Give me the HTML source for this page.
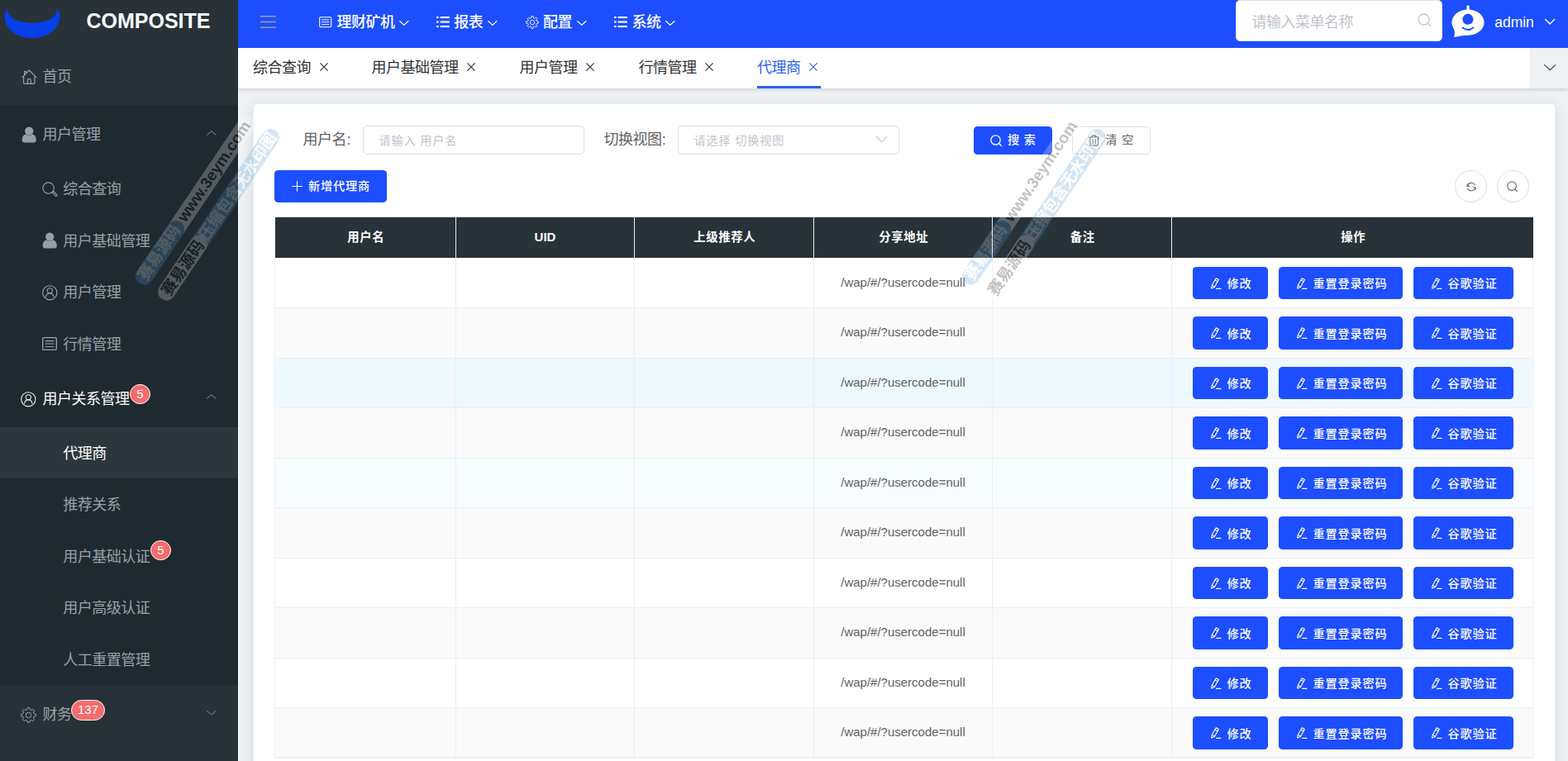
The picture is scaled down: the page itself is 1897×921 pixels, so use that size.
<!DOCTYPE html>
<html lang="zh-CN">
<head>
<meta charset="utf-8">
<title>COMPOSITE - 代理商</title>
<style>
*{box-sizing:border-box;margin:0;padding:0}
html,body{width:1897px;height:921px;overflow:hidden;background:#eff2f4}
body{font-family:"Liberation Sans","Noto Sans CJK SC",sans-serif;font-size:17.5px;color:#606266;position:relative}
ul{list-style:none}
svg.ic{position:absolute;display:block;overflow:visible}
.t{position:absolute;white-space:nowrap;line-height:1;font-size:18px;letter-spacing:-.5px}
.t.s{font-size:14.2px;letter-spacing:.8px}
.t.l{font-size:17.5px;letter-spacing:0}

/* sidebar */
.side{position:absolute;left:0;top:0;width:288px;height:921px;background:#273238;color:#98a1aa;overflow:hidden;z-index:6}
.logo{position:relative;height:57px;background:#293238}
.logo h1{position:absolute;left:104.5px;top:12.5px;line-height:25px;font-size:25px;font-weight:700;color:#fff}
.menu .top{height:70px;position:relative;font-size:17.5px}
.menu .grp{background:#1f2a30}
.menu .top .t{left:51.5px;top:26.9px}
.menu .top.cur{color:#fff}
.menu .sub li{height:62.4px;position:relative;font-size:17.5px}
.menu .sub li .t{left:76.3px;top:23.4px}
.menu .sub li.act{background:#2c363d;color:#fff}
.badge{position:absolute;background:#f56c6c;color:#fff;border:1.25px solid #fff;border-radius:13px;height:24.4px;line-height:21.6px;font-size:15px;text-align:center;padding:0 7px;min-width:25px;white-space:nowrap}

/* header */
.head{position:absolute;left:288px;top:0;width:1609px;height:58px;background:#1d4eff;color:#fff;z-index:4}
.nav li{position:absolute;top:0;height:58px;font-size:17.5px;font-weight:500}
.nav li .t{top:17.9px}
.search{position:absolute;left:1207px;top:-0.5px;width:250px;height:50.5px;background:#fff;border-radius:5px;border:1.25px solid #dcdfe6;color:#c0c4cc;font-size:17.5px}
.search .t{left:18.6px;top:17.2px}
.uname{left:1520.2px;top:18.6px}

/* tabs */
.tabs{position:absolute;left:288px;top:58px;width:1609px;height:49px;background:#fff;box-shadow:0 1.5px 5px rgba(0,21,41,.16);z-index:3}
.tabs li{position:absolute;top:0;height:49px;font-size:17.5px;color:#303133}
.tabs li .t{top:15px;left:0}
.tabs li.on{color:#2b62ec}
.tabs li.on:after{content:"";position:absolute;left:0;right:0;bottom:0;height:3px;background:#2b62ec}
.tabs .more{position:absolute;right:0;top:0;width:46px;height:49px;background:#eff2f4}

/* card */
.card{position:absolute;left:306px;top:125px;width:1576px;height:840px;background:#fff;border:1px solid #ebeef5;border-radius:5px;box-shadow:0 2.5px 15px rgba(0,0,0,.1);z-index:1}
.edge{position:absolute;left:288px;top:107px;width:1px;height:814px;background:#fff;z-index:2}
.lab{color:#606266}
.lab i{font-style:normal;margin-left:.4px}
.inp{position:absolute;height:35px;border:1px solid #dcdfe6;border-radius:5px;background:#fff;color:#c0c4cc;font-size:15px}
.inp .t{left:18.6px;top:10.4px}
.btn{position:absolute;border-radius:4.5px;background:#1d4eff;color:#fff;font-size:15px;white-space:nowrap;font-weight:500}
.btn.plain{background:#fff;border:1px solid #dcdfe6;color:#606266;font-weight:400}
.circ{position:absolute;width:39px;height:39px;border:1px solid #dcdfe6;border-radius:50%;background:#fff}

/* table */
table{position:absolute;left:25px;top:135.6px;border-left:1px solid #ebeef5;border-top:1px solid #ebeef5;border-bottom:1px solid #ebeef5;border-collapse:separate;border-spacing:0;table-layout:fixed;width:1523px;font-size:15px}
th{height:49px;background:#283239;color:#fff;font-weight:700;text-align:center;border-right:1px solid #ebeef5;padding:1px 0 0;line-height:1;font-size:14.4px;letter-spacing:.6px}
th{padding-left:1.6px}
th.l{font-size:15px;letter-spacing:0;padding:0 0 1px}
th:last-child{border-right:0}
td{border-right:1px solid #ebeef5;border-bottom:1px solid #ebeef5;text-align:center;padding:0;color:#606266;line-height:1;white-space:nowrap}
tr.s td{background:#fafafa}
tr.h td{background:#eef8ff}
tr.c td{background:#f7fcff}
td.u{padding-bottom:2px}
td.op{text-align:left;vertical-align:top;padding-left:25px;font-size:0}
td .ob{display:inline-block;position:relative;font-weight:500;height:39px;border-radius:4.5px;background:#1d4eff;color:#fff;margin-right:13px;vertical-align:top}
td .ob.w2{width:91px}
td .ob.w6{width:150px}
td .ob.w4{width:121px;margin-right:0}
tr.e .ob{height:40px}
td .ob .pen{position:absolute;left:21px;top:13px}
td .ob .t{left:41.6px;top:13.4px}
tr.e .ob .t{top:14px}
tr.e .ob .pen{top:13.7px}

/* watermark */
.wm{position:absolute;z-index:9;width:0;height:0;transform-origin:0 0;transform:rotate(-56deg);opacity:.235;pointer-events:none;font-weight:700;white-space:nowrap}
.wm div{position:absolute;height:21px;border-radius:10.5px;font-size:19px;line-height:21px}
.wm span{position:absolute;top:-.5px}
.wm .g{background:#fff;color:#000}
.wm .b{background:#4a98d8;color:#fff}
</style>
</head>
<body>
<aside class="side">
<div class="logo"><svg class="ic" style="left:0;top:0" width="80" height="57" viewBox="0 0 80 57"><path d="M9.8 9.6 C6.6 13.6 5.2 18.4 5.7 22.6 C7.2 36.4 22 46.2 39 46.2 C56 46.2 70.8 36.4 72.3 22.6 C72.8 18.4 71.4 13.6 68.2 9.6 C69.6 15 67.6 19.4 61.4 22.8 C55 26.2 47.2 28 39 28 C30.8 28 23 26.2 16.6 22.8 C10.4 19.4 8.4 15 9.8 9.6Z" fill="#0540e9"/></svg><h1>COMPOSITE</h1></div>
<nav class="menu">
<div class="top "><svg class="ic" style="left:25.6px;top:27px" width="19" height="19" viewBox="0 0 19 19" fill="none" ><g stroke="#98a1aa" stroke-width="1.15" stroke-linejoin="round" stroke-linecap="round"><path d="M0.8 9.6 L9.3 1 L17.8 9.6"/><path d="M2.6 8.6 V16.2 Q2.6 17.4 3.8 17.4 H14.8 Q16 17.4 16 16.2 V8.6"/><path d="M3.6 6.4 V2.4 H5.4 V4.6"/><path d="M7.4 17.2 V13 Q7.4 11.4 9.3 11.4 Q11.2 11.4 11.2 13 V17.2"/></g></svg><span class="t">首页</span></div>
<div class="grp">
<div class="top "><svg class="ic" style="left:25.6px;top:25.8px" width="19" height="21" viewBox="0 0 19 21" fill="none" ><g fill="#969fa8"><circle cx="9.2" cy="5.6" r="5.2"/><path d="M0.6 16.6 Q0.6 10.2 5.2 9.4 Q9.2 12.4 13.2 9.4 Q17.8 10.2 17.8 16.6 Q17.8 19.6 14.8 19.6 H3.6 Q0.6 19.6 0.6 16.6Z"/></g></svg><span class="t">用户管理</span><svg class="ic" style="left:249.8px;top:30.6px" width="11.6" height="5.8" viewBox="0 0 11.6 5.8" fill="none" ><path d="M0.6 5.2 L5.8 0.8 L11.0 5.2" stroke="#8b949c" stroke-width="1.0" stroke-linecap="round" stroke-linejoin="round"/></svg></div>
<ul class="sub">
<li><svg class="ic" style="left:50.6px;top:22.8px" width="19" height="19" viewBox="0 0 19 19" fill="none" ><g stroke="#98a1aa" stroke-width="1.1"><circle cx="7.6" cy="7.6" r="6.7"/><path d="M12.1 12.9 L13.6 11.5 L18.2 16.2 L16.7 17.7Z" stroke-linejoin="round"/></g></svg><span class="t">综合查询</span></li>
<li><svg class="ic" style="left:50.6px;top:21.8px" width="19" height="21" viewBox="0 0 19 21" fill="none" ><g fill="#969fa8"><circle cx="9.2" cy="5.6" r="5.2"/><path d="M0.6 16.6 Q0.6 10.2 5.2 9.4 Q9.2 12.4 13.2 9.4 Q17.8 10.2 17.8 16.6 Q17.8 19.6 14.8 19.6 H3.6 Q0.6 19.6 0.6 16.6Z"/></g></svg><span class="t">用户基础管理</span></li>
<li><svg class="ic" style="left:50.5px;top:23px" width="19" height="19" viewBox="0 0 19 19" fill="none" ><g stroke="#98a1aa" stroke-width="1.1" stroke-linecap="round"><circle cx="9.3" cy="9.3" r="8.6"/><circle cx="9.3" cy="6.8" r="3.1"/><path d="M4.6 14.2 Q5.4 9.9 9.3 9.9 Q13.2 9.9 14 14.2"/></g></svg><span class="t">用户管理</span></li>
<li><svg class="ic" style="left:51px;top:24px" width="18" height="16" viewBox="0 0 18 16" fill="none" ><g stroke="#98a1aa" stroke-width="1.3" stroke-linecap="round"><rect x="0.7" y="0.7" width="16.6" height="14.6" rx="1.1"/><path d="M3.96 4.64 H14.04 M3.96 8.00 H14.04 M3.96 11.52 H14.04" stroke-width="1.10"/></g></svg><span class="t">行情管理</span></li>
</ul>
</div>
<div class="grp">
<div class="top cur"><svg class="ic" style="left:25.3px;top:27.4px" width="19" height="19" viewBox="0 0 19 19" fill="none" ><g stroke="#e8eaec" stroke-width="1.1" stroke-linecap="round"><circle cx="9.3" cy="9.3" r="8.6"/><circle cx="9.3" cy="6.8" r="3.1"/><path d="M4.6 14.2 Q5.4 9.9 9.3 9.9 Q13.2 9.9 14 14.2"/></g></svg><span class="t" style="top:27.9px">用户关系管理</span><span class="badge" style="left:157px;top:18px">5</span><svg class="ic" style="left:249.8px;top:30.6px" width="11.6" height="5.8" viewBox="0 0 11.6 5.8" fill="none" ><path d="M0.6 5.2 L5.8 0.8 L11.0 5.2" stroke="#8b949c" stroke-width="1.0" stroke-linecap="round" stroke-linejoin="round"/></svg></div>
<ul class="sub">
<li class="act"><span class="t">代理商</span></li>
<li><span class="t">推荐关系</span></li>
<li><span class="t">用户基础认证</span><span class="badge" style="left:182px;top:12.4px">5</span></li>
<li><span class="t">用户高级认证</span></li>
<li><span class="t">人工重置管理</span></li>
</ul>
</div>
<div class="top "><svg class="ic" style="left:25.4px;top:27.2px" width="19" height="19" viewBox="0 0 19 19" fill="none" ><g stroke="#98a1aa" stroke-width="1.0" stroke-linejoin="round"><path d="M16.17 7.73 L18.30 8.17 L18.30 10.83 L16.17 11.27 L15.47 12.96 L16.66 14.78 L14.78 16.66 L12.96 15.47 L11.27 16.17 L10.83 18.30 L8.17 18.30 L7.73 16.17 L6.04 15.47 L4.22 16.66 L2.34 14.78 L3.53 12.96 L2.83 11.27 L0.70 10.83 L0.70 8.17 L2.83 7.73 L3.53 6.04 L2.34 4.22 L4.22 2.34 L6.04 3.53 L7.73 2.83 L8.17 0.70 L10.83 0.70 L11.27 2.83 L12.96 3.53 L14.78 2.34 L16.66 4.22 L15.47 6.04Z"/><circle cx="9.5" cy="9.5" r="3.23"/></g></svg><span class="t" style="top:27.9px">财务</span><span class="badge" style="left:86px;top:18.6px">137</span><svg class="ic" style="left:249.8px;top:31.2px" width="11.6" height="5.8" viewBox="0 0 11.6 5.8" fill="none" ><path d="M0.6 0.6 L5.8 5.0 L11.0 0.6" stroke="#8b949c" stroke-width="1.0" stroke-linecap="round" stroke-linejoin="round"/></svg></div>
</nav>
</aside>

<header class="head">
<svg class="ic" style="left:26.8px;top:18.6px" width="19" height="15" viewBox="0 0 19 15" fill="none" ><path d="M0 0.8 H19 M0 7.5 H19 M0 14.2 H19" stroke="#9b9b98" stroke-width="1.4"/></svg>
<ul class="nav">
<li style="left:98px"><svg class="ic" style="left:0px;top:20px" width="15.4" height="13.4" viewBox="0 0 15.4 13.4" fill="none" ><g stroke="#fff" stroke-width="1.1" stroke-linecap="round"><rect x="0.7" y="0.7" width="14.0" height="12.0" rx="1.1"/><path d="M3.39 3.89 H12.01 M3.39 6.70 H12.01 M3.39 9.65 H12.01" stroke-width="0.94"/></g></svg><span class="t" style="left:21.5px">理财矿机</span><svg class="ic" style="left:97.1px;top:24.8px" width="11.6" height="6.2" viewBox="0 0 11.6 6.2" fill="none" ><path d="M0.6 0.6 L5.8 5.4 L11.0 0.6" stroke="#fff" stroke-width="1.3" stroke-linecap="round" stroke-linejoin="round"/></svg></li>
<li style="left:239.7px"><svg class="ic" style="left:0px;top:20.2px" width="16" height="14" viewBox="0 0 16 14" fill="none" ><g fill="#fff"><rect x="0" y="0" width="2.6" height="2.1"/><rect x="4.6" y="0" width="11.2" height="2.1"/><rect x="0" y="5.5" width="2.6" height="2.1"/><rect x="4.6" y="5.5" width="11.2" height="2.1"/><rect x="0" y="11" width="2.6" height="2.1"/><rect x="4.6" y="11" width="11.2" height="2.1"/></g></svg><span class="t" style="left:21.5px">报表</span><svg class="ic" style="left:62.1px;top:24.8px" width="11.6" height="6.2" viewBox="0 0 11.6 6.2" fill="none" ><path d="M0.6 0.6 L5.8 5.4 L11.0 0.6" stroke="#fff" stroke-width="1.3" stroke-linecap="round" stroke-linejoin="round"/></svg></li>
<li style="left:347.6px"><svg class="ic" style="left:0.2px;top:19px" width="16" height="16" viewBox="0 0 16 16" fill="none" ><g stroke="#fff" stroke-width="0.9" stroke-linejoin="round"><path d="M13.22 6.61 L15.32 6.89 L15.32 9.11 L13.22 9.39 L12.67 10.71 L13.96 12.39 L12.39 13.96 L10.71 12.67 L9.39 13.22 L9.11 15.32 L6.89 15.32 L6.61 13.22 L5.29 12.67 L3.61 13.96 L2.04 12.39 L3.33 10.71 L2.78 9.39 L0.68 9.11 L0.68 6.89 L2.78 6.61 L3.33 5.29 L2.04 3.61 L3.61 2.04 L5.29 3.33 L6.61 2.78 L6.89 0.68 L9.11 0.68 L9.39 2.78 L10.71 3.33 L12.39 2.04 L13.96 3.61 L12.67 5.29Z"/><circle cx="8.0" cy="8.0" r="2.72"/></g></svg><span class="t" style="left:21.5px">配置</span><svg class="ic" style="left:62.1px;top:24.8px" width="11.6" height="6.2" viewBox="0 0 11.6 6.2" fill="none" ><path d="M0.6 0.6 L5.8 5.4 L11.0 0.6" stroke="#fff" stroke-width="1.3" stroke-linecap="round" stroke-linejoin="round"/></svg></li>
<li style="left:455px"><svg class="ic" style="left:0px;top:20.2px" width="16" height="14" viewBox="0 0 16 14" fill="none" ><g fill="#fff"><rect x="0" y="0" width="2.6" height="2.1"/><rect x="4.6" y="0" width="11.2" height="2.1"/><rect x="0" y="5.5" width="2.6" height="2.1"/><rect x="4.6" y="5.5" width="11.2" height="2.1"/><rect x="0" y="11" width="2.6" height="2.1"/><rect x="4.6" y="11" width="11.2" height="2.1"/></g></svg><span class="t" style="left:21.5px">系统</span><svg class="ic" style="left:62.1px;top:24.8px" width="11.6" height="6.2" viewBox="0 0 11.6 6.2" fill="none" ><path d="M0.6 0.6 L5.8 5.4 L11.0 0.6" stroke="#fff" stroke-width="1.3" stroke-linecap="round" stroke-linejoin="round"/></svg></li>
</ul>
<div class="search"><span class="t">请输入菜单名称</span><svg class="ic" style="left:218.5px;top:15.6px" width="16.4" height="16.4" viewBox="0 0 16.4 16.4" fill="none" ><g stroke="#c0c4cc" stroke-width="1.3" stroke-linecap="round"><circle cx="7.54" cy="7.54" r="6.56"/><path d="M12.46 12.46 L15.58 15.58"/></g></svg></div>
<svg class="ic" style="left:1468.4px;top:6.2px" width="40.4" height="39.4" viewBox="0 0 40.4 39.4" fill="none" ><g fill="#fff"><rect x="18.5" y="0.7" width="3.1" height="7"/><ellipse cx="20" cy="21.1" rx="19.6" ry="15.6"/><path d="M2.2 27 C4 31 4.6 34.6 3 38.9 C9 37.8 14 36.6 21 36.4 Z"/></g><circle cx="19.9" cy="17.3" r="6.5" fill="#1d4eff"/><path d="M13.6 27.6 Q19.9 32.6 26.3 27.6" stroke="#1d4eff" stroke-width="1.9" stroke-linecap="round"/></svg>
<span class="t l uname">admin</span>
<svg class="ic" style="left:1580.8px;top:23px" width="12.2" height="6.8" viewBox="0 0 12.2 6.8" fill="none" ><path d="M0.6 0.6 L6.1 6.0 L11.6 0.6" stroke="#fff" stroke-width="1.4" stroke-linecap="round" stroke-linejoin="round"/></svg>
</header>

<div class="tabs">
<ul>
<li style="left:18px;width:94.5px"><span class="t">综合查询</span><svg class="ic" style="left:80.8px;top:18px" width="10" height="10" viewBox="0 0 10 10" fill="none" ><path d="M0.4 0.4 L9.6 9.6 M9.6 0.4 L0.4 9.6" stroke="#303133" stroke-width="1.15"/></svg></li>
<li style="left:161.6px;width:129.5px"><span class="t">用户基础管理</span><svg class="ic" style="left:115.8px;top:18px" width="10" height="10" viewBox="0 0 10 10" fill="none" ><path d="M0.4 0.4 L9.6 9.6 M9.6 0.4 L0.4 9.6" stroke="#303133" stroke-width="1.15"/></svg></li>
<li style="left:340.6px;width:94.5px"><span class="t">用户管理</span><svg class="ic" style="left:80.8px;top:18px" width="10" height="10" viewBox="0 0 10 10" fill="none" ><path d="M0.4 0.4 L9.6 9.6 M9.6 0.4 L0.4 9.6" stroke="#303133" stroke-width="1.15"/></svg></li>
<li style="left:484.5px;width:94.5px"><span class="t">行情管理</span><svg class="ic" style="left:80.8px;top:18px" width="10" height="10" viewBox="0 0 10 10" fill="none" ><path d="M0.4 0.4 L9.6 9.6 M9.6 0.4 L0.4 9.6" stroke="#303133" stroke-width="1.15"/></svg></li>
<li class="on" style="left:628px;width:77.0px"><span class="t">代理商</span><svg class="ic" style="left:63.3px;top:18px" width="10" height="10" viewBox="0 0 10 10" fill="none" ><path d="M0.4 0.4 L9.6 9.6 M9.6 0.4 L0.4 9.6" stroke="#2b62ec" stroke-width="1.15"/></svg></li>
</ul>
<div class="more"><svg class="ic" style="left:17.2px;top:20.4px" width="14.4" height="7.6" viewBox="0 0 14.4 7.6" fill="none" ><path d="M0.6 0.6 L7.2 6.8 L13.8 0.6" stroke="#454a50" stroke-width="1.2" stroke-linecap="round" stroke-linejoin="round"/></svg></div>
</div>

<div class="edge"></div>
<main class="card">
<form>
<span class="t lab" style="left:59.6px;top:34.4px">用户名<i>:</i></span>
<div class="inp" style="left:132px;top:26px;width:268px"><span class="t s">请输入 用户名</span></div>
<span class="t lab" style="left:423.4px;top:34.4px">切换视图<i>:</i></span>
<div class="inp" style="left:513px;top:26px;width:268px"><span class="t s">请选择 切换视图</span><svg class="ic" style="left:239px;top:12.4px" width="13.2" height="7.4" viewBox="0 0 13.2 7.4" fill="none" ><path d="M0.6 0.6 L6.6 6.6000000000000005 L12.6 0.6" stroke="#c0c4cc" stroke-width="1.2" stroke-linecap="round" stroke-linejoin="round"/></svg></div>
<div class="btn" style="left:871px;top:27px;width:95px;height:34px"><svg class="ic" style="left:19.8px;top:10px" width="14.2" height="14.2" viewBox="0 0 14.2 14.2" fill="none" ><g stroke="#fff" stroke-width="1.35" stroke-linecap="round"><circle cx="6.53" cy="6.53" r="5.68"/><path d="M10.79 10.79 L13.49 13.49"/></g></svg><span class="t s" style="left:41px;top:9.2px">搜 索</span></div>
<div class="btn plain" style="left:990px;top:27px;width:95px;height:34px"><svg class="ic" style="left:19px;top:8.6px" width="13.4" height="13.6" viewBox="0 0 13.4 13.6" fill="none" ><g stroke="#606266" stroke-width="1.1" stroke-linejoin="round" stroke-linecap="round"><path d="M0.6 3 H12.8"/><path d="M4.6 2.8 V1 H8.8 V2.8"/><path d="M2 3.2 V12.2 Q2 13 2.8 13 H10.6 Q11.4 13 11.4 12.2 V3.2"/><path d="M5.2 5.6 V10.6 M8.2 5.6 V10.6"/></g></svg><span class="t s" style="left:39.6px;top:8.2px">清 空</span></div>
</form>
<div class="btn" style="left:25px;top:80px;width:136px;height:39px"><svg class="ic" style="left:21px;top:13.1px" width="13" height="13" viewBox="0 0 13 13" fill="none" ><path d="M6.5 0.2 V12.8 M0.2 6.5 H12.8" stroke="#fff" stroke-width="1.15"/></svg><span class="t s" style="left:41px;top:11.8px">新增代理商</span></div>
<div class="circ" style="left:1453px;top:80px"><svg class="ic" style="left:12.6px;top:12.6px" width="12.2" height="12.2" viewBox="0 0 12.2 12.2" fill="none" ><g stroke="#606266" stroke-width="1.05" stroke-linecap="round" stroke-linejoin="round"><path d="M1.3 5.4 A5 5 0 0 1 10.6 3.9"/><path d="M10.9 6.8 A5 5 0 0 1 1.6 8.3"/><path d="M1.2 2.8 V5.4 H3.8"/><path d="M11 9.4 V6.8 H8.4"/></g></svg></div>
<div class="circ" style="left:1504px;top:80px"><svg class="ic" style="left:11.4px;top:11.8px" width="13.2" height="13.2" viewBox="0 0 13.2 13.2" fill="none" ><g stroke="#606266" stroke-width="1.1" stroke-linecap="round"><circle cx="6.07" cy="6.07" r="5.28"/><path d="M10.03 10.03 L12.54 12.54"/></g></svg></div>
<table>
<colgroup><col style="width:219px"><col style="width:216px"><col style="width:217px"><col style="width:216px"><col style="width:217px"><col style="width:437px"></colgroup>
<thead><tr><th>用户名</th><th class="l">UID</th><th>上级推荐人</th><th>分享地址</th><th>备注</th><th>操作</th></tr></thead>
<tbody>
<tr style="height:61px"><td></td><td></td><td></td><td>/wap/#/?usercode=null</td><td></td><td class="op" style="padding-top:11px"><span class="ob w2"><svg class="pen" width="13.6" height="14.2" viewBox="0 0 13.6 14.2" fill="none"><g stroke="#fff" stroke-width="1.1" stroke-linejoin="round" stroke-linecap="round"><path d="M7.2 0.8 L10.4 2.6 L5.4 11.4 L1.6 13 L2.2 9.6 Z"/><path d="M6 3 L9.2 4.8"/><path d="M2.4 9.4 L5.4 11.2"/><path d="M7.6 13.4 H13"/></g></svg><span class="t s">修改</span></span><span class="ob w6"><svg class="pen" width="13.6" height="14.2" viewBox="0 0 13.6 14.2" fill="none"><g stroke="#fff" stroke-width="1.1" stroke-linejoin="round" stroke-linecap="round"><path d="M7.2 0.8 L10.4 2.6 L5.4 11.4 L1.6 13 L2.2 9.6 Z"/><path d="M6 3 L9.2 4.8"/><path d="M2.4 9.4 L5.4 11.2"/><path d="M7.6 13.4 H13"/></g></svg><span class="t s">重置登录密码</span></span><span class="ob w4"><svg class="pen" width="13.6" height="14.2" viewBox="0 0 13.6 14.2" fill="none"><g stroke="#fff" stroke-width="1.1" stroke-linejoin="round" stroke-linecap="round"><path d="M7.2 0.8 L10.4 2.6 L5.4 11.4 L1.6 13 L2.2 9.6 Z"/><path d="M6 3 L9.2 4.8"/><path d="M2.4 9.4 L5.4 11.2"/><path d="M7.6 13.4 H13"/></g></svg><span class="t s">谷歌验证</span></span></td></tr>
<tr class="s e" style="height:61px"><td></td><td></td><td></td><td class="u">/wap/#/?usercode=null</td><td></td><td class="op" style="padding-top:10px"><span class="ob w2"><svg class="pen" width="13.6" height="14.2" viewBox="0 0 13.6 14.2" fill="none"><g stroke="#fff" stroke-width="1.1" stroke-linejoin="round" stroke-linecap="round"><path d="M7.2 0.8 L10.4 2.6 L5.4 11.4 L1.6 13 L2.2 9.6 Z"/><path d="M6 3 L9.2 4.8"/><path d="M2.4 9.4 L5.4 11.2"/><path d="M7.6 13.4 H13"/></g></svg><span class="t s">修改</span></span><span class="ob w6"><svg class="pen" width="13.6" height="14.2" viewBox="0 0 13.6 14.2" fill="none"><g stroke="#fff" stroke-width="1.1" stroke-linejoin="round" stroke-linecap="round"><path d="M7.2 0.8 L10.4 2.6 L5.4 11.4 L1.6 13 L2.2 9.6 Z"/><path d="M6 3 L9.2 4.8"/><path d="M2.4 9.4 L5.4 11.2"/><path d="M7.6 13.4 H13"/></g></svg><span class="t s">重置登录密码</span></span><span class="ob w4"><svg class="pen" width="13.6" height="14.2" viewBox="0 0 13.6 14.2" fill="none"><g stroke="#fff" stroke-width="1.1" stroke-linejoin="round" stroke-linecap="round"><path d="M7.2 0.8 L10.4 2.6 L5.4 11.4 L1.6 13 L2.2 9.6 Z"/><path d="M6 3 L9.2 4.8"/><path d="M2.4 9.4 L5.4 11.2"/><path d="M7.6 13.4 H13"/></g></svg><span class="t s">谷歌验证</span></span></td></tr>
<tr class="h" style="height:60px"><td></td><td></td><td></td><td class="u">/wap/#/?usercode=null</td><td></td><td class="op" style="padding-top:10px"><span class="ob w2"><svg class="pen" width="13.6" height="14.2" viewBox="0 0 13.6 14.2" fill="none"><g stroke="#fff" stroke-width="1.1" stroke-linejoin="round" stroke-linecap="round"><path d="M7.2 0.8 L10.4 2.6 L5.4 11.4 L1.6 13 L2.2 9.6 Z"/><path d="M6 3 L9.2 4.8"/><path d="M2.4 9.4 L5.4 11.2"/><path d="M7.6 13.4 H13"/></g></svg><span class="t s">修改</span></span><span class="ob w6"><svg class="pen" width="13.6" height="14.2" viewBox="0 0 13.6 14.2" fill="none"><g stroke="#fff" stroke-width="1.1" stroke-linejoin="round" stroke-linecap="round"><path d="M7.2 0.8 L10.4 2.6 L5.4 11.4 L1.6 13 L2.2 9.6 Z"/><path d="M6 3 L9.2 4.8"/><path d="M2.4 9.4 L5.4 11.2"/><path d="M7.6 13.4 H13"/></g></svg><span class="t s">重置登录密码</span></span><span class="ob w4"><svg class="pen" width="13.6" height="14.2" viewBox="0 0 13.6 14.2" fill="none"><g stroke="#fff" stroke-width="1.1" stroke-linejoin="round" stroke-linecap="round"><path d="M7.2 0.8 L10.4 2.6 L5.4 11.4 L1.6 13 L2.2 9.6 Z"/><path d="M6 3 L9.2 4.8"/><path d="M2.4 9.4 L5.4 11.2"/><path d="M7.6 13.4 H13"/></g></svg><span class="t s">谷歌验证</span></span></td></tr>
<tr class="s e" style="height:61px"><td></td><td></td><td></td><td class="u">/wap/#/?usercode=null</td><td></td><td class="op" style="padding-top:10px"><span class="ob w2"><svg class="pen" width="13.6" height="14.2" viewBox="0 0 13.6 14.2" fill="none"><g stroke="#fff" stroke-width="1.1" stroke-linejoin="round" stroke-linecap="round"><path d="M7.2 0.8 L10.4 2.6 L5.4 11.4 L1.6 13 L2.2 9.6 Z"/><path d="M6 3 L9.2 4.8"/><path d="M2.4 9.4 L5.4 11.2"/><path d="M7.6 13.4 H13"/></g></svg><span class="t s">修改</span></span><span class="ob w6"><svg class="pen" width="13.6" height="14.2" viewBox="0 0 13.6 14.2" fill="none"><g stroke="#fff" stroke-width="1.1" stroke-linejoin="round" stroke-linecap="round"><path d="M7.2 0.8 L10.4 2.6 L5.4 11.4 L1.6 13 L2.2 9.6 Z"/><path d="M6 3 L9.2 4.8"/><path d="M2.4 9.4 L5.4 11.2"/><path d="M7.6 13.4 H13"/></g></svg><span class="t s">重置登录密码</span></span><span class="ob w4"><svg class="pen" width="13.6" height="14.2" viewBox="0 0 13.6 14.2" fill="none"><g stroke="#fff" stroke-width="1.1" stroke-linejoin="round" stroke-linecap="round"><path d="M7.2 0.8 L10.4 2.6 L5.4 11.4 L1.6 13 L2.2 9.6 Z"/><path d="M6 3 L9.2 4.8"/><path d="M2.4 9.4 L5.4 11.2"/><path d="M7.6 13.4 H13"/></g></svg><span class="t s">谷歌验证</span></span></td></tr>
<tr class="c" style="height:60px"><td></td><td></td><td></td><td class="u">/wap/#/?usercode=null</td><td></td><td class="op" style="padding-top:10px"><span class="ob w2"><svg class="pen" width="13.6" height="14.2" viewBox="0 0 13.6 14.2" fill="none"><g stroke="#fff" stroke-width="1.1" stroke-linejoin="round" stroke-linecap="round"><path d="M7.2 0.8 L10.4 2.6 L5.4 11.4 L1.6 13 L2.2 9.6 Z"/><path d="M6 3 L9.2 4.8"/><path d="M2.4 9.4 L5.4 11.2"/><path d="M7.6 13.4 H13"/></g></svg><span class="t s">修改</span></span><span class="ob w6"><svg class="pen" width="13.6" height="14.2" viewBox="0 0 13.6 14.2" fill="none"><g stroke="#fff" stroke-width="1.1" stroke-linejoin="round" stroke-linecap="round"><path d="M7.2 0.8 L10.4 2.6 L5.4 11.4 L1.6 13 L2.2 9.6 Z"/><path d="M6 3 L9.2 4.8"/><path d="M2.4 9.4 L5.4 11.2"/><path d="M7.6 13.4 H13"/></g></svg><span class="t s">重置登录密码</span></span><span class="ob w4"><svg class="pen" width="13.6" height="14.2" viewBox="0 0 13.6 14.2" fill="none"><g stroke="#fff" stroke-width="1.1" stroke-linejoin="round" stroke-linecap="round"><path d="M7.2 0.8 L10.4 2.6 L5.4 11.4 L1.6 13 L2.2 9.6 Z"/><path d="M6 3 L9.2 4.8"/><path d="M2.4 9.4 L5.4 11.2"/><path d="M7.6 13.4 H13"/></g></svg><span class="t s">谷歌验证</span></span></td></tr>
<tr class="s e" style="height:61px"><td></td><td></td><td></td><td class="u">/wap/#/?usercode=null</td><td></td><td class="op" style="padding-top:10px"><span class="ob w2"><svg class="pen" width="13.6" height="14.2" viewBox="0 0 13.6 14.2" fill="none"><g stroke="#fff" stroke-width="1.1" stroke-linejoin="round" stroke-linecap="round"><path d="M7.2 0.8 L10.4 2.6 L5.4 11.4 L1.6 13 L2.2 9.6 Z"/><path d="M6 3 L9.2 4.8"/><path d="M2.4 9.4 L5.4 11.2"/><path d="M7.6 13.4 H13"/></g></svg><span class="t s">修改</span></span><span class="ob w6"><svg class="pen" width="13.6" height="14.2" viewBox="0 0 13.6 14.2" fill="none"><g stroke="#fff" stroke-width="1.1" stroke-linejoin="round" stroke-linecap="round"><path d="M7.2 0.8 L10.4 2.6 L5.4 11.4 L1.6 13 L2.2 9.6 Z"/><path d="M6 3 L9.2 4.8"/><path d="M2.4 9.4 L5.4 11.2"/><path d="M7.6 13.4 H13"/></g></svg><span class="t s">重置登录密码</span></span><span class="ob w4"><svg class="pen" width="13.6" height="14.2" viewBox="0 0 13.6 14.2" fill="none"><g stroke="#fff" stroke-width="1.1" stroke-linejoin="round" stroke-linecap="round"><path d="M7.2 0.8 L10.4 2.6 L5.4 11.4 L1.6 13 L2.2 9.6 Z"/><path d="M6 3 L9.2 4.8"/><path d="M2.4 9.4 L5.4 11.2"/><path d="M7.6 13.4 H13"/></g></svg><span class="t s">谷歌验证</span></span></td></tr>
<tr style="height:60px"><td></td><td></td><td></td><td class="u">/wap/#/?usercode=null</td><td></td><td class="op" style="padding-top:10px"><span class="ob w2"><svg class="pen" width="13.6" height="14.2" viewBox="0 0 13.6 14.2" fill="none"><g stroke="#fff" stroke-width="1.1" stroke-linejoin="round" stroke-linecap="round"><path d="M7.2 0.8 L10.4 2.6 L5.4 11.4 L1.6 13 L2.2 9.6 Z"/><path d="M6 3 L9.2 4.8"/><path d="M2.4 9.4 L5.4 11.2"/><path d="M7.6 13.4 H13"/></g></svg><span class="t s">修改</span></span><span class="ob w6"><svg class="pen" width="13.6" height="14.2" viewBox="0 0 13.6 14.2" fill="none"><g stroke="#fff" stroke-width="1.1" stroke-linejoin="round" stroke-linecap="round"><path d="M7.2 0.8 L10.4 2.6 L5.4 11.4 L1.6 13 L2.2 9.6 Z"/><path d="M6 3 L9.2 4.8"/><path d="M2.4 9.4 L5.4 11.2"/><path d="M7.6 13.4 H13"/></g></svg><span class="t s">重置登录密码</span></span><span class="ob w4"><svg class="pen" width="13.6" height="14.2" viewBox="0 0 13.6 14.2" fill="none"><g stroke="#fff" stroke-width="1.1" stroke-linejoin="round" stroke-linecap="round"><path d="M7.2 0.8 L10.4 2.6 L5.4 11.4 L1.6 13 L2.2 9.6 Z"/><path d="M6 3 L9.2 4.8"/><path d="M2.4 9.4 L5.4 11.2"/><path d="M7.6 13.4 H13"/></g></svg><span class="t s">谷歌验证</span></span></td></tr>
<tr class="s e" style="height:61px"><td></td><td></td><td></td><td class="u">/wap/#/?usercode=null</td><td></td><td class="op" style="padding-top:10px"><span class="ob w2"><svg class="pen" width="13.6" height="14.2" viewBox="0 0 13.6 14.2" fill="none"><g stroke="#fff" stroke-width="1.1" stroke-linejoin="round" stroke-linecap="round"><path d="M7.2 0.8 L10.4 2.6 L5.4 11.4 L1.6 13 L2.2 9.6 Z"/><path d="M6 3 L9.2 4.8"/><path d="M2.4 9.4 L5.4 11.2"/><path d="M7.6 13.4 H13"/></g></svg><span class="t s">修改</span></span><span class="ob w6"><svg class="pen" width="13.6" height="14.2" viewBox="0 0 13.6 14.2" fill="none"><g stroke="#fff" stroke-width="1.1" stroke-linejoin="round" stroke-linecap="round"><path d="M7.2 0.8 L10.4 2.6 L5.4 11.4 L1.6 13 L2.2 9.6 Z"/><path d="M6 3 L9.2 4.8"/><path d="M2.4 9.4 L5.4 11.2"/><path d="M7.6 13.4 H13"/></g></svg><span class="t s">重置登录密码</span></span><span class="ob w4"><svg class="pen" width="13.6" height="14.2" viewBox="0 0 13.6 14.2" fill="none"><g stroke="#fff" stroke-width="1.1" stroke-linejoin="round" stroke-linecap="round"><path d="M7.2 0.8 L10.4 2.6 L5.4 11.4 L1.6 13 L2.2 9.6 Z"/><path d="M6 3 L9.2 4.8"/><path d="M2.4 9.4 L5.4 11.2"/><path d="M7.6 13.4 H13"/></g></svg><span class="t s">谷歌验证</span></span></td></tr>
<tr style="height:60px"><td></td><td></td><td></td><td class="u">/wap/#/?usercode=null</td><td></td><td class="op" style="padding-top:10px"><span class="ob w2"><svg class="pen" width="13.6" height="14.2" viewBox="0 0 13.6 14.2" fill="none"><g stroke="#fff" stroke-width="1.1" stroke-linejoin="round" stroke-linecap="round"><path d="M7.2 0.8 L10.4 2.6 L5.4 11.4 L1.6 13 L2.2 9.6 Z"/><path d="M6 3 L9.2 4.8"/><path d="M2.4 9.4 L5.4 11.2"/><path d="M7.6 13.4 H13"/></g></svg><span class="t s">修改</span></span><span class="ob w6"><svg class="pen" width="13.6" height="14.2" viewBox="0 0 13.6 14.2" fill="none"><g stroke="#fff" stroke-width="1.1" stroke-linejoin="round" stroke-linecap="round"><path d="M7.2 0.8 L10.4 2.6 L5.4 11.4 L1.6 13 L2.2 9.6 Z"/><path d="M6 3 L9.2 4.8"/><path d="M2.4 9.4 L5.4 11.2"/><path d="M7.6 13.4 H13"/></g></svg><span class="t s">重置登录密码</span></span><span class="ob w4"><svg class="pen" width="13.6" height="14.2" viewBox="0 0 13.6 14.2" fill="none"><g stroke="#fff" stroke-width="1.1" stroke-linejoin="round" stroke-linecap="round"><path d="M7.2 0.8 L10.4 2.6 L5.4 11.4 L1.6 13 L2.2 9.6 Z"/><path d="M6 3 L9.2 4.8"/><path d="M2.4 9.4 L5.4 11.2"/><path d="M7.6 13.4 H13"/></g></svg><span class="t s">谷歌验证</span></span></td></tr>
<tr class="s e" style="height:60px"><td></td><td></td><td></td><td class="u">/wap/#/?usercode=null</td><td></td><td class="op" style="padding-top:10px"><span class="ob w2"><svg class="pen" width="13.6" height="14.2" viewBox="0 0 13.6 14.2" fill="none"><g stroke="#fff" stroke-width="1.1" stroke-linejoin="round" stroke-linecap="round"><path d="M7.2 0.8 L10.4 2.6 L5.4 11.4 L1.6 13 L2.2 9.6 Z"/><path d="M6 3 L9.2 4.8"/><path d="M2.4 9.4 L5.4 11.2"/><path d="M7.6 13.4 H13"/></g></svg><span class="t s">修改</span></span><span class="ob w6"><svg class="pen" width="13.6" height="14.2" viewBox="0 0 13.6 14.2" fill="none"><g stroke="#fff" stroke-width="1.1" stroke-linejoin="round" stroke-linecap="round"><path d="M7.2 0.8 L10.4 2.6 L5.4 11.4 L1.6 13 L2.2 9.6 Z"/><path d="M6 3 L9.2 4.8"/><path d="M2.4 9.4 L5.4 11.2"/><path d="M7.6 13.4 H13"/></g></svg><span class="t s">重置登录密码</span></span><span class="ob w4"><svg class="pen" width="13.6" height="14.2" viewBox="0 0 13.6 14.2" fill="none"><g stroke="#fff" stroke-width="1.1" stroke-linejoin="round" stroke-linecap="round"><path d="M7.2 0.8 L10.4 2.6 L5.4 11.4 L1.6 13 L2.2 9.6 Z"/><path d="M6 3 L9.2 4.8"/><path d="M2.4 9.4 L5.4 11.2"/><path d="M7.6 13.4 H13"/></g></svg><span class="t s">谷歌验证</span></span></td></tr>
</tbody>
</table>
</main>

<div class="wm" style="left:173.5px;top:333.9px"><div class="g" style="left:-10.5px;top:-10.5px;width:242.5px"><span style="left:92.1px">www.3eym.com</span></div><div class="b" style="left:-10.5px;top:-10.5px;width:89px"><span style="left:6.5px">赛易源码</span></div><div class="b" style="left:29.2px;top:23.4px;width:206px"><span style="left:48.2px">压缩包含无水印图</span></div><div class="g" style="left:-10.8px;top:23.4px;width:90.4px"><span style="left:7.4px">赛易源码</span></div></div>
<div class="wm" style="left:1173.5px;top:333.9px"><div class="g" style="left:-10.5px;top:-10.5px;width:242.5px"><span style="left:92.1px">www.3eym.com</span></div><div class="b" style="left:-10.5px;top:-10.5px;width:89px"><span style="left:6.5px">赛易源码</span></div><div class="b" style="left:29.2px;top:23.4px;width:206px"><span style="left:48.2px">压缩包含无水印图</span></div><div class="g" style="left:-10.8px;top:23.4px;width:90.4px"><span style="left:7.4px">赛易源码</span></div></div>
</body>
</html>
